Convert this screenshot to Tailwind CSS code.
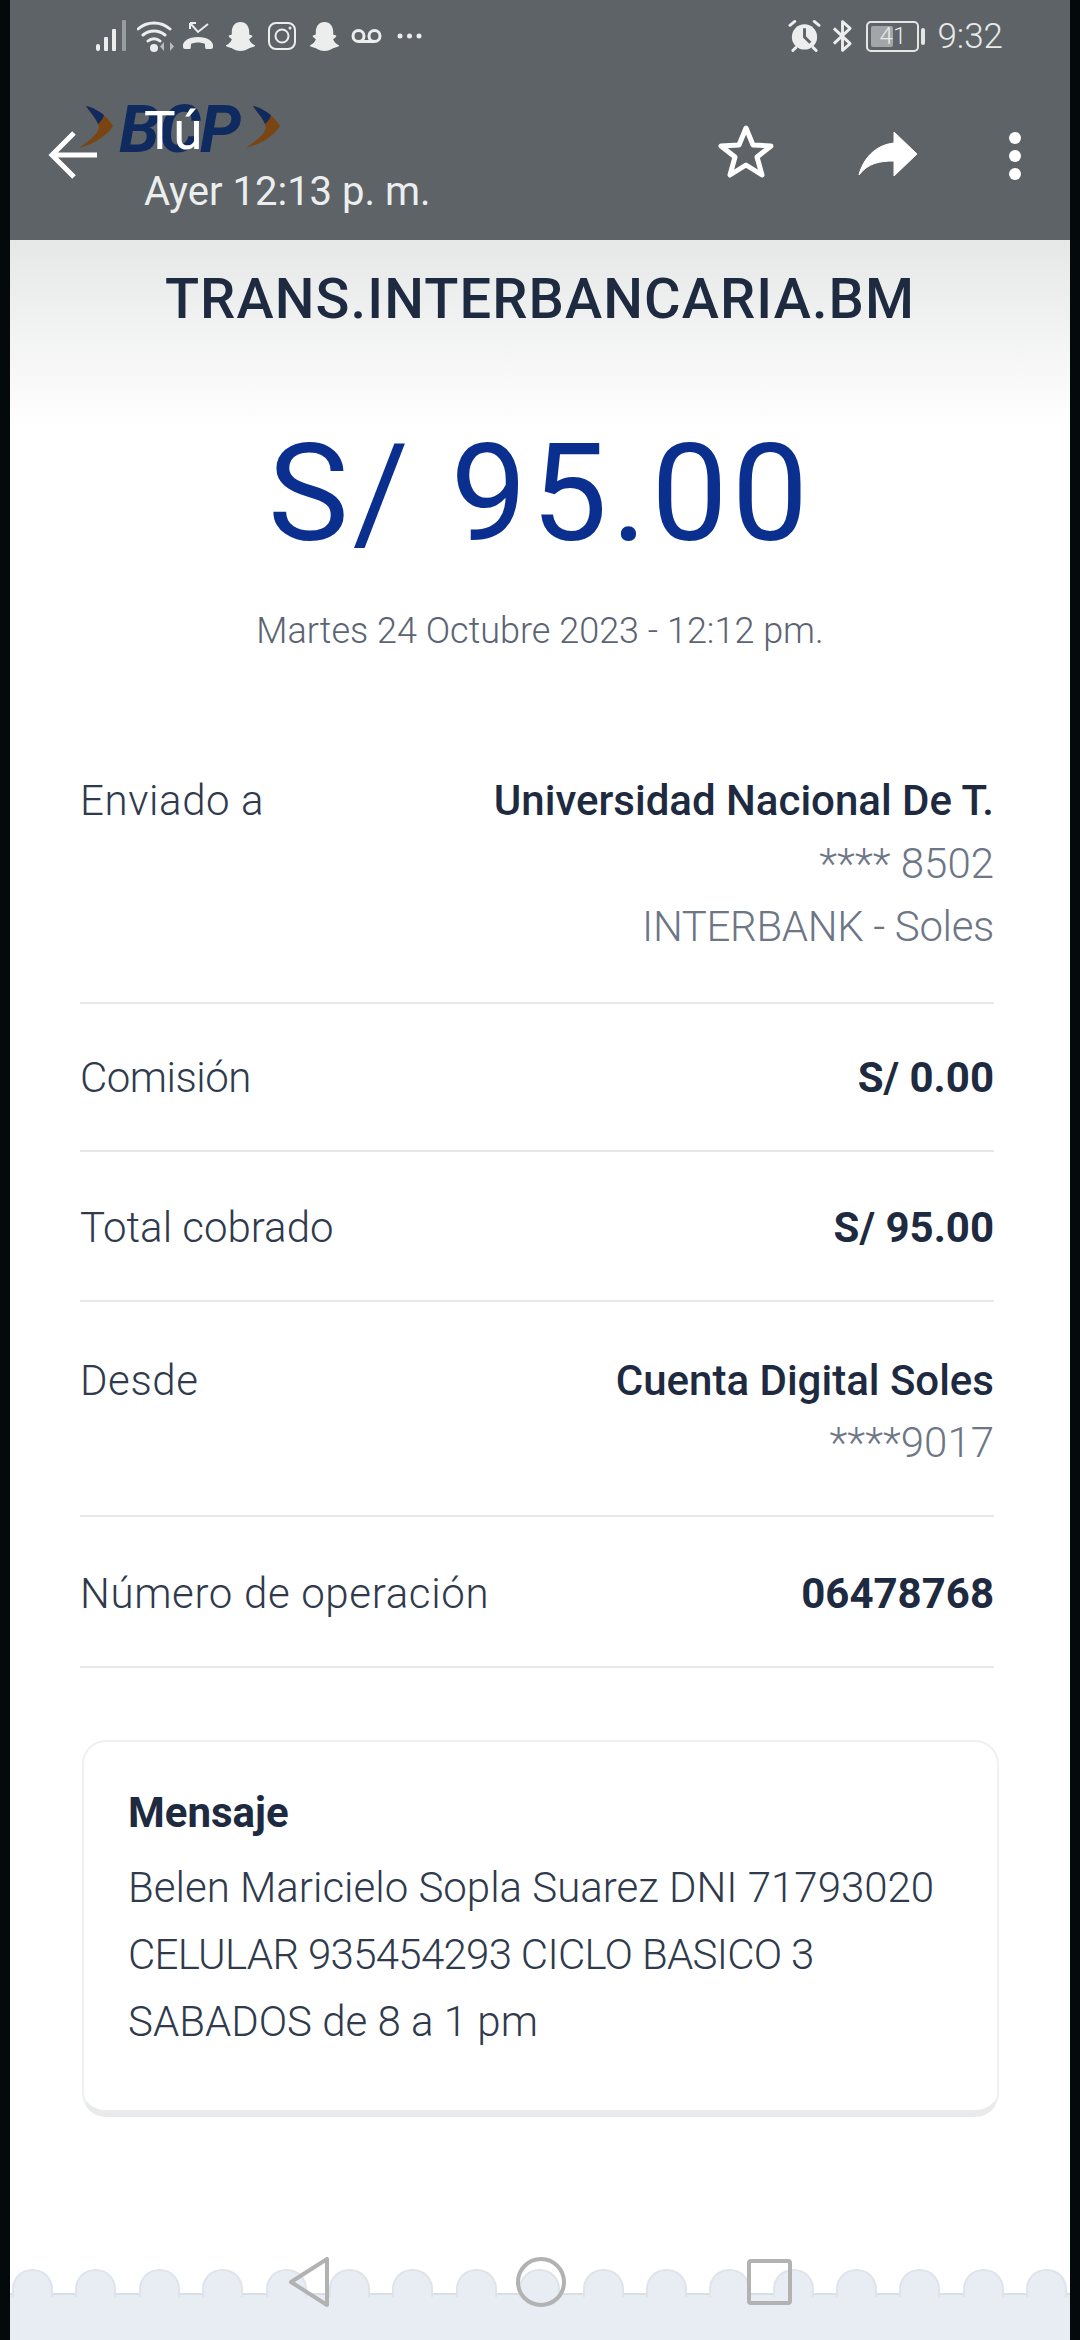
<!DOCTYPE html>
<html>
<head>
  <meta charset="UTF-8" />
  <meta name="viewport" content="width=device-width, initial-scale=1.0" />
  <script src="https://cdn.jsdelivr.net/npm/@tailwindcss/browser@4"></script>
</head>
<body class="bg-[#04090c] font-['Roboto',sans-serif]">
  <div class="relative w-[1080px] h-[2340px] overflow-hidden bg-[#04090c]">
    <div class="ml-[10px] w-[1060px] h-full bg-white flex flex-col">

      <!-- top bar -->
      <header class="relative h-[240px] shrink-0 bg-[#5e6367] text-white">
        <div class="flex justify-between items-center pt-[18px] h-[54px] pl-[85px] pr-[67px] text-[#e8eaea]">
          <div class="flex items-center">
            <svg width="33" height="32" viewBox="0 0 33 32" fill="#eceeee"><rect x="1" y="24" width="4" height="7" rx="2"/><rect x="9" y="17" width="4" height="14" rx="1"/><rect x="17" y="9" width="4" height="22" rx="1"/><rect x="27" y="0" width="4" height="31" rx="1" fill="#9a9d9f"/></svg>
            <svg class="ml-[9px]" width="38" height="32" viewBox="0 0 38 32" fill="none" stroke="#eceeee" stroke-width="3" stroke-linecap="round"><path d="M1 9a24 24 0 0 1 32 0M6 15a17 17 0 0 1 22 0M11 21a9 9 0 0 1 12 0"/><circle cx="17" cy="28" r="2.5" fill="#eceeee"/><path d="M27 22v9l-4-4.500zM33 22v9l4-4.500z" fill="#b9bcbd" stroke="none"/></svg>
            <svg class="ml-[7px]" width="32" height="28" viewBox="0 0 32 28" fill="#eceeee"><path d="M1 25c-1-6 6-10 15-10s16 4 15 10c0 1-1 2-2 2h-5c-1 0-1-4-1-5-4-2-10-2-14 0 0 1 0 5-1 5H3c-1 0-2-1-2-2z"/><path d="M8 1l8 9 10-8M8 1v6M8 1h6" fill="none" stroke="#eceeee" stroke-width="2"/></svg>
            <svg class="ml-[11px]" width="31" height="30" viewBox="0 0 32 31" fill="#eceeee"><path d="M16 1c6 0 9 5 9 10v3l3 1c1 2-3 3-3 4 1 3 4 5 6 6 0 2-4 2-5 3-2 0-4 3-10 3s-8-3-10-3c-1-1-5-1-5-3 2-1 5-3 6-6 0-1-4-2-3-4l3-1v-3C7 6 10 1 16 1z"/></svg>
            <svg class="ml-[12px]" width="28" height="28" viewBox="0 0 28 28" fill="none" stroke="#eceeee" stroke-width="2"><rect x="1" y="1" width="26" height="26" rx="7"/><circle cx="14" cy="14" r="6.500"/><circle cx="22" cy="6" r="1.500" fill="#eceeee" stroke="none"/></svg>
            <svg class="ml-[13px]" width="31" height="30" viewBox="0 0 32 31" fill="#eceeee"><path d="M16 1c6 0 9 5 9 10v3l3 1c1 2-3 3-3 4 1 3 4 5 6 6 0 2-4 2-5 3-2 0-4 3-10 3s-8-3-10-3c-1-1-5-1-5-3 2-1 5-3 6-6 0-1-4-2-3-4l3-1v-3C7 6 10 1 16 1z"/></svg>
            <svg class="ml-[11px]" width="31" height="16" viewBox="0 0 31 16" fill="none" stroke="#eceeee" stroke-width="3"><circle cx="7.500" cy="8" r="5.500"/><circle cx="23.500" cy="8" r="5.500"/><path d="M7.500 13.500h16"/></svg>
            <svg class="ml-[15px]" width="25" height="8" viewBox="0 0 25 8" fill="#eceeee"><circle cx="3" cy="4" r="2.500"/><circle cx="12.500" cy="4" r="2.500"/><circle cx="22" cy="4" r="2.500"/></svg>
          </div>
          <div class="flex items-center">
            <svg width="33" height="34" viewBox="0 0 34 34" fill="#eceeee"><circle cx="17" cy="18" r="13"/><path d="M17 9v9l6 6" fill="none" stroke="#5e6367" stroke-width="3"/><path d="M2 6l5-4M32 6l-5-4M5 32l3-3M29 32l-3-3" stroke="#eceeee" stroke-width="3" stroke-linecap="round"/></svg>
            <svg class="ml-[11px]" width="21" height="34" viewBox="0 0 22 34" fill="none" stroke="#eceeee" stroke-width="3" stroke-linejoin="round"><path d="M2 9l17 16-8 7V2l8 7L2 25"/></svg>
            <div class="relative ml-[13px] w-[53px] h-[31px] rounded-[5px] border-2 border-[#e4e6e6] text-[24px] font-light leading-[27px] text-center"><div class="absolute left-[3px] top-[3px] bottom-[3px] w-[22px] rounded-[2px] bg-[#a3a6a8]"></div><span class="relative">41</span></div>
            <div class="ml-[2px] w-[4px] h-[17px] rounded-full bg-[#e4e6e6]"></div>
            <span class="ml-[12px] text-[35px] leading-none font-light">9:32</span>
          </div>
        </div>

        <div class="relative h-[186px]">
          <!-- logo sits under the title -->
          <svg class="absolute left-[69px] top-[52px]" width="35" height="42" viewBox="0 0 35 42"><path d="M7 0c11 3 22 11 27 20C28 30 15 38 0 42c9-7 19-13 20-21C18 13 11 7 7 0z" fill="#7a4512"/><path d="M7 0c6 1 13 5 18 9-1 4-3 6-6 9C17 12 11 6 7 0z" fill="#0f2a5e"/></svg>
          <span class="absolute left-[109px] top-[43px] text-[66px] leading-none font-bold italic tracking-[-1px] text-[#0f2a5e]">BCP</span>
          <svg class="absolute left-[236px] top-[52px]" width="35" height="42" viewBox="0 0 35 42"><path d="M7 0c11 3 22 11 27 20C28 30 15 38 0 42c9-7 19-13 20-21C18 13 11 7 7 0z" fill="#7a4512"/><path d="M7 0c6 1 13 5 18 9-1 4-3 6-6 9C17 12 11 6 7 0z" fill="#0f2a5e"/></svg>
          <svg class="absolute left-[37px] top-[76px]" width="50" height="50" viewBox="0 0 50 50" fill="none" stroke="white" stroke-width="5"><path d="M50 25H4M27 3L5 25l22 22"/></svg>
          <span class="absolute left-[134px] top-[51px] text-[53px] leading-none text-white">Tú</span>
          <span class="absolute left-[134px] top-[118px] text-[40px] leading-none text-[#eceeee]">Ayer 12:13 p. m.</span>
          <svg class="absolute left-[708px] top-[70px]" width="56" height="54" viewBox="0 0 56 54" fill="none" stroke="white" stroke-width="5" stroke-linejoin="round"><path d="M28 4l7 17 18 1-14 11 5 18-16-10-16 10 5-18L3 22l18-1z"/></svg>
          <svg class="absolute left-[848px] top-[77px]" width="60" height="46" viewBox="0 0 60 46" fill="white"><path d="M36 1l23 22-23 22V30C22 30 10 32 1 44 5 28 17 14 36 12z" stroke="white" stroke-linejoin="round"/></svg>
          <svg class="absolute left-[997px] top-[78px]" width="16" height="48" viewBox="0 0 16 48" fill="white"><circle cx="8" cy="6" r="6"/><circle cx="8" cy="24" r="6"/><circle cx="8" cy="42" r="6"/></svg>
        </div>
      </header>

      <!-- transfer receipt -->
      <main class="flex-1 flex flex-col">
        <div class="bg-[linear-gradient(#e6e7e7,#fff_190px)] pt-[28px] text-center">
          <h1 class="text-[56px] leading-[62px] font-medium tracking-[1.1px] text-[#1e2a40]">TRANS.INTERBANCARIA.BM</h1>
          <div class="mt-[94px] text-[136px] leading-[140px] tracking-[4px] text-[#0a2f8f]">S/ 95.00</div>
        </div>
        <p class="text-center mt-[45px] text-[36px] leading-[44px] font-light text-[#5b6472]">Martes 24 Octubre 2023 - 12:12 pm.</p>

        <div class="ml-[70px] w-[914px] mt-[116px] text-[42px] font-light text-[#2f3a4d]">
          <div class="flex justify-between h-[235px] border-b-2 border-[#e6e8ea]">
            <span class="leading-[63px] tracking-[0.6px]">Enviado a</span>
            <div class="text-right leading-[63px]">
              <div class="font-medium text-[#1e2a40]">Universidad Nacional De T.</div>
              <div class="text-[#6d7686]">**** 8502</div>
              <div class="text-[#6d7686] tracking-[-0.35px]">INTERBANK - Soles</div>
            </div>
          </div>
          <div class="flex justify-between items-center h-[148px] border-b-2 border-[#e6e8ea]">
            <span class="tracking-[-0.5px]">Comisión</span><span class="font-bold text-[#1e2a40]">S/ 0.00</span>
          </div>
          <div class="flex justify-between items-center h-[150px] pt-[3px] border-b-2 border-[#e6e8ea]">
            <span>Total cobrado</span><span class="font-bold text-[#1e2a40]">S/ 95.00</span>
          </div>
          <div class="flex justify-between h-[215px] border-b-2 border-[#e6e8ea] pt-[48px] leading-[62px]">
            <span class="tracking-[0.6px]">Desde</span>
            <div class="text-right">
              <div class="font-medium text-[#1e2a40]">Cuenta Digital Soles</div>
              <div class="text-[#6d7686]">****9017</div>
            </div>
          </div>
          <div class="flex justify-between items-center h-[151px] pt-[3px] border-b-2 border-[#e6e8ea]">
            <span class="tracking-[0.65px]">Número de operación</span><span class="font-bold text-[#1e2a40]">06478768</span>
          </div>
        </div>

        <div class="ml-[72px] mt-[72px] w-[917px] h-[377px] rounded-[24px] border-2 border-[#eff0f1] border-b-[7px] border-b-[#e8eaec] px-[44px] pt-[37px] text-[42px] leading-[67px] font-light text-[#2f3a4d]">
          <div class="font-bold text-[#1e2a40]">Mensaje</div>
          <div class="mt-[8px]">Belen Maricielo Sopla Suarez DNI 71793020</div>
          <div class="tracking-[-0.7px]">CELULAR 935454293 CICLO BASICO 3</div>
          <div>SABADOS de 8 a 1 pm</div>
        </div>

        <!-- scalloped footer -->
        <div class="mt-auto h-[47px] bg-[#e8edf4] border-t-2 border-[#d9dfe7]">
          <div class="flex gap-[22.4px] pl-[2px] -mt-[26px] h-[28px]">
            <div class="w-[41px] shrink-0 rounded-t-[20px] bg-[#e8edf4] border-t-2 border-x-2 border-[#dfe4eb]"></div>
            <div class="w-[41px] shrink-0 rounded-t-[20px] bg-[#e8edf4] border-t-2 border-x-2 border-[#dfe4eb]"></div>
            <div class="w-[41px] shrink-0 rounded-t-[20px] bg-[#e8edf4] border-t-2 border-x-2 border-[#dfe4eb]"></div>
            <div class="w-[41px] shrink-0 rounded-t-[20px] bg-[#e8edf4] border-t-2 border-x-2 border-[#dfe4eb]"></div>
            <div class="w-[41px] shrink-0 rounded-t-[20px] bg-[#e8edf4] border-t-2 border-x-2 border-[#dfe4eb]"></div>
            <div class="w-[41px] shrink-0 rounded-t-[20px] bg-[#e8edf4] border-t-2 border-x-2 border-[#dfe4eb]"></div>
            <div class="w-[41px] shrink-0 rounded-t-[20px] bg-[#e8edf4] border-t-2 border-x-2 border-[#dfe4eb]"></div>
            <div class="w-[41px] shrink-0 rounded-t-[20px] bg-[#e8edf4] border-t-2 border-x-2 border-[#dfe4eb]"></div>
            <div class="w-[41px] shrink-0 rounded-t-[20px] bg-[#e8edf4] border-t-2 border-x-2 border-[#dfe4eb]"></div>
            <div class="w-[41px] shrink-0 rounded-t-[20px] bg-[#e8edf4] border-t-2 border-x-2 border-[#dfe4eb]"></div>
            <div class="w-[41px] shrink-0 rounded-t-[20px] bg-[#e8edf4] border-t-2 border-x-2 border-[#dfe4eb]"></div>
            <div class="w-[41px] shrink-0 rounded-t-[20px] bg-[#e8edf4] border-t-2 border-x-2 border-[#dfe4eb]"></div>
            <div class="w-[41px] shrink-0 rounded-t-[20px] bg-[#e8edf4] border-t-2 border-x-2 border-[#dfe4eb]"></div>
            <div class="w-[41px] shrink-0 rounded-t-[20px] bg-[#e8edf4] border-t-2 border-x-2 border-[#dfe4eb]"></div>
            <div class="w-[41px] shrink-0 rounded-t-[20px] bg-[#e8edf4] border-t-2 border-x-2 border-[#dfe4eb]"></div>
            <div class="w-[41px] shrink-0 rounded-t-[20px] bg-[#e8edf4] border-t-2 border-x-2 border-[#dfe4eb]"></div>
            <div class="w-[41px] shrink-0 rounded-t-[20px] bg-[#e8edf4] border-t-2 border-x-2 border-[#dfe4eb]"></div>
          </div>
        </div>
      </main>
    </div>

    <!-- system nav buttons float over the page -->
    <svg class="absolute left-[288px] top-[2257px]" width="42" height="50" viewBox="0 0 42 50" fill="none" stroke="#b2b2b2" stroke-width="4" stroke-linejoin="round"><path d="M39 2v46L3 25z"/></svg>
    <svg class="absolute left-[516px] top-[2257px]" width="50" height="50" viewBox="0 0 50 50" fill="none" stroke="#b2b2b2" stroke-width="4"><circle cx="25" cy="25" r="23"/></svg>
    <svg class="absolute left-[747px] top-[2259px]" width="45" height="46" viewBox="0 0 45 46" fill="none" stroke="#b2b2b2" stroke-width="4"><rect x="2" y="2" width="41" height="42" rx="2"/></svg>
  </div>
</body>
</html>
